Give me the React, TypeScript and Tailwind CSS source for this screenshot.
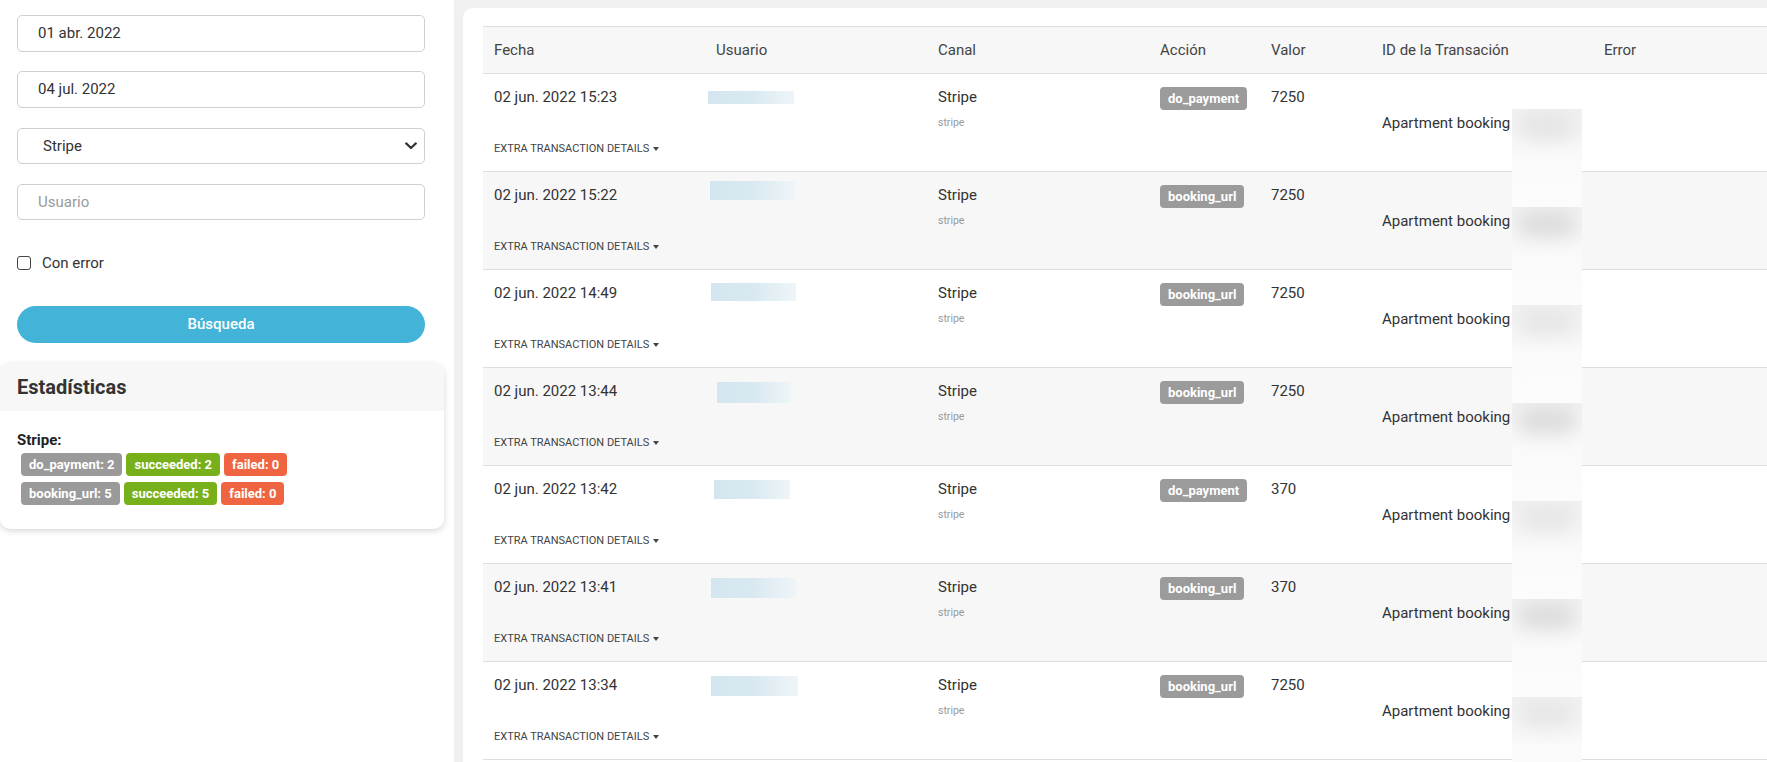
import React from "react";

type Row = {
  date: string;
  action: string;
  valor: string;
  blur: string;
  blob: string;
};

const rows: Row[] = [
  { date: "02 jun. 2022 15:23", action: "do_payment", valor: "7250", blur: "ml-[3px] w-[86px] mt-[17px] h-[13px]", blob: "bg-[#e4e4e4]" },
  { date: "02 jun. 2022 15:22", action: "booking_url", valor: "7250", blur: "ml-[5px] w-[85px] mt-[9px] h-[19px]", blob: "bg-[#dcdcdc]" },
  { date: "02 jun. 2022 14:49", action: "booking_url", valor: "7250", blur: "ml-[6px] w-[85px] mt-[13px] h-[18px]", blob: "bg-[#e6e6e6]" },
  { date: "02 jun. 2022 13:44", action: "booking_url", valor: "7250", blur: "ml-[12px] w-[74px] mt-[14px] h-[21px]", blob: "bg-[#dcdcdc]" },
  { date: "02 jun. 2022 13:42", action: "do_payment", valor: "370", blur: "ml-[9px] w-[76px] mt-[14px] h-[19px]", blob: "bg-[#e6e6e6]" },
  { date: "02 jun. 2022 13:41", action: "booking_url", valor: "370", blur: "ml-[6px] w-[85px] mt-[14px] h-[20px]", blob: "bg-[#dcdcdc]" },
  { date: "02 jun. 2022 13:34", action: "booking_url", valor: "7250", blur: "ml-[6px] w-[87px] mt-[14px] h-[20px]", blob: "bg-[#e6e6e6]" },
];

const gridCols = "grid grid-cols-[222px_222px_222px_111px_111px_222px_1fr]";

function Badge({ children, color }: { children: React.ReactNode; color: string }) {
  return (
    <span className={`inline-flex items-center h-[23px] px-[8px] rounded-[4px] text-white font-bold text-[13px] leading-none ${color}`}>
      {children}
    </span>
  );
}

function Sidebar() {
  return (
    <div className="w-[454px] shrink-0 bg-white flex flex-col">
      <div className="pl-[17px] w-[425px] flex flex-col">
        <div className="mt-[15px] h-[37px] border border-[#cfcfcf] rounded-[5px] pl-[20px] flex items-center text-[15px] text-[#333]">
          01 abr. 2022
        </div>
        <div className="mt-[19px] h-[37px] border border-[#cfcfcf] rounded-[5px] pl-[20px] flex items-center text-[15px] text-[#333]">
          04 jul. 2022
        </div>
        <div className="mt-[20px] h-[36px] border border-[#cfcfcf] rounded-[5px] pl-[25px] pr-[7px] flex items-center justify-between text-[15px] text-[#333]">
          <span>Stripe</span>
          <svg width="12" height="8" viewBox="0 0 12 8" fill="none">
            <path d="M1.2 1.4l4.8 4.6 4.8-4.6" stroke="#333" strokeWidth="2.2" strokeLinecap="round" strokeLinejoin="round" />
          </svg>
        </div>
        <div className="mt-[20px] h-[36px] border border-[#cfcfcf] rounded-[5px] pl-[20px] flex items-center text-[15px] text-[#9a9a9a]">
          Usuario
        </div>
        <div className="mt-[33px] h-[20px] flex items-center">
          <span className="w-[14px] h-[14px] border-[1.5px] border-[#444] rounded-[3px] bg-white" />
          <span className="ml-[11px] text-[15px] text-[#333] leading-[20px]">Con error</span>
        </div>
        <div className="mt-[33px] h-[37px] rounded-full bg-[#43b4d8] flex items-center justify-center text-white text-[15px] font-medium">
          Búsqueda
        </div>
      </div>
      <div className="mt-[20px] w-[444px] rounded-[10px] bg-white shadow-[0_2px_6px_rgba(0,0,0,0.16)] overflow-hidden">
        <div className="h-[48px] bg-[#f7f7f7] pl-[17px] flex items-center text-[20px] font-bold text-[#333]">
          Estadísticas
        </div>
        <div className="pl-[17px] pt-[20px] pb-[24px]">
          <div className="text-[15px] font-bold text-[#222] leading-[18px]">Stripe:</div>
          <div className="ml-[4px] mt-[4px] flex gap-[4px]">
            <Badge color="bg-[#9a9a9a]">do_payment: 2</Badge>
            <Badge color="bg-[#78b01c]">succeeded: 2</Badge>
            <Badge color="bg-[#ef6541]">failed: 0</Badge>
          </div>
          <div className="ml-[4px] mt-[6px] flex gap-[4px]">
            <Badge color="bg-[#9a9a9a]">booking_url: 5</Badge>
            <Badge color="bg-[#78b01c]">succeeded: 5</Badge>
            <Badge color="bg-[#ef6541]">failed: 0</Badge>
          </div>
        </div>
      </div>
    </div>
  );
}

function TableRow({ r, i }: { r: Row; i: number }) {
  const bg = i % 2 === 1 ? "bg-[#f7f7f7]" : "bg-white";
  return (
    <div className={`${gridCols} h-[98px] border-b border-[#dedede] ${bg} text-[15px] text-[#333]`}>
      <div className="pl-[11px] pt-[13px]">
        <div className="leading-[20px]">{r.date}</div>
        <div className="mt-[35px] h-[14px] flex items-center gap-[4px] text-[11px] leading-[14px] text-[#444] uppercase">
          <span>Extra transaction details</span>
          <svg width="6" height="4" viewBox="0 0 6 4">
            <path d="M0 0h6L3 4z" fill="#444" />
          </svg>
        </div>
      </div>
      <div>
        <div className={`${r.blur} bg-linear-to-r from-[#d3e6ef] via-[#d9e9f1] to-[#eef5f8] blur-[0.6px]`} />
      </div>
      <div className="pl-[11px] pt-[13px]">
        <div className="leading-[20px]">Stripe</div>
        <div className="mt-[9px] text-[10.5px] leading-[14px] text-[#9a9a9a]">stripe</div>
      </div>
      <div className="pl-[11px] pt-[13px]">
        <span className="inline-flex items-center h-[23px] px-[8px] rounded-[4px] bg-[#9b9b9b] text-white font-bold text-[13px] leading-none">
          {r.action}
        </span>
      </div>
      <div className="pl-[11px] pt-[13px]">
        <div className="leading-[20px]">{r.valor}</div>
      </div>
      <div className="relative pl-[11px] flex items-center">
        <span className="leading-[20px]">Apartment booking</span>
        <div className="absolute left-[141px] top-[35px] w-[70px] h-[98px] z-10 bg-linear-to-b from-[#f1f1f1] via-[#fafafa] to-[#fcfcfc] overflow-hidden">
          <div className={`absolute left-[6px] top-[4px] w-[58px] h-[26px] rounded-full ${r.blob} blur-[9px]`} />
        </div>
      </div>
      <div />
    </div>
  );
}

export default function App() {
  return (
    <div className="w-[1767px] h-[762px] overflow-hidden flex bg-[#f0f0f0] font-['Roboto',sans-serif]">
      <Sidebar />
      <div className="flex-1 pl-[9px] pt-[8px] overflow-hidden">
        <div className="w-[1330px] h-[800px] bg-white rounded-t-[10px] pt-[18px] pl-[20px]">
          <div className={`${gridCols} h-[48px] border-y border-[#dedede] bg-[#f7f7f7] items-center text-[15px] text-[#444]`}>
            <div className="pl-[11px]">Fecha</div>
            <div className="pl-[11px]">Usuario</div>
            <div className="pl-[11px]">Canal</div>
            <div className="pl-[11px]">Acción</div>
            <div className="pl-[11px]">Valor</div>
            <div className="pl-[11px]">ID de la Transación</div>
            <div className="pl-[11px]">Error</div>
          </div>
          {rows.map((r, i) => (
            <TableRow key={i} r={r} i={i} />
          ))}
        </div>
      </div>
    </div>
  );
}
